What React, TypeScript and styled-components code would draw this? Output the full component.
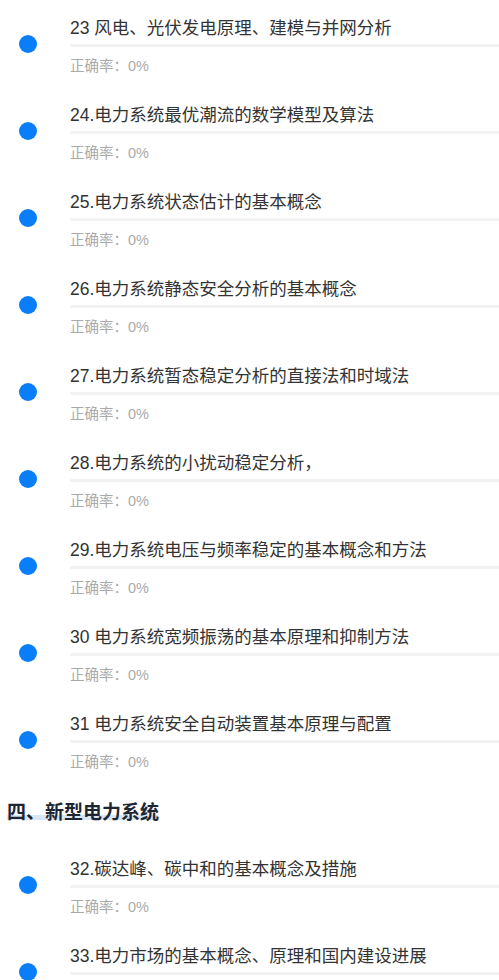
import styled, { createGlobalStyle } from "styled-components";

type Lesson = { title: string; rate: string };

const partThree: Lesson[] = [
  { title: "23 风电、光伏发电原理、建模与并网分析", rate: "0%" },
  { title: "24.电力系统最优潮流的数学模型及算法", rate: "0%" },
  { title: "25.电力系统状态估计的基本概念", rate: "0%" },
  { title: "26.电力系统静态安全分析的基本概念", rate: "0%" },
  { title: "27.电力系统暂态稳定分析的直接法和时域法", rate: "0%" },
  { title: "28.电力系统的小扰动稳定分析，", rate: "0%" },
  { title: "29.电力系统电压与频率稳定的基本概念和方法", rate: "0%" },
  { title: "30 电力系统宽频振荡的基本原理和抑制方法", rate: "0%" },
  { title: "31 电力系统安全自动装置基本原理与配置", rate: "0%" },
];

const partFour: Lesson[] = [
  { title: "32.碳达峰、碳中和的基本概念及措施", rate: "0%" },
  { title: "33.电力市场的基本概念、原理和国内建设进展", rate: "0%" },
];

function LessonItem({ lesson }: { lesson: Lesson }) {
  return (
    <Item>
      <DotCol>
        <Dot />
      </DotCol>
      <Content>
        <Title>{lesson.title}</Title>
        <Track />
        <Rate>正确率：{lesson.rate}</Rate>
      </Content>
    </Item>
  );
}

function App() {
  return (
    <>
      <GlobalStyle />
      <Page>
        {partThree.map((l) => (
          <LessonItem key={l.title} lesson={l} />
        ))}
        <SectionHead>
          <SectionTitle>四、新型电力系统</SectionTitle>
        </SectionHead>
        {partFour.map((l) => (
          <LessonItem key={l.title} lesson={l} />
        ))}
      </Page>
    </>
  );
}

export default App;

const GlobalStyle = createGlobalStyle`
  html, body {
    margin: 0;
    padding: 0;
    overflow: hidden;
    background: #fff;
  }
  body {
    font-family: "Liberation Sans", "Noto Sans CJK SC", sans-serif;
  }
`;

const Page = styled.div`
  width: 499px;
  display: flex;
  flex-direction: column;
`;

const Item = styled.div`
  display: flex;
  height: 87px;
  box-sizing: border-box;
  padding-top: 16px;
`;

const DotCol = styled.div`
  width: 70px;
  flex-shrink: 0;
  box-sizing: border-box;
  padding: 19px 0 0 19px;
`;

const Dot = styled.div`
  width: 18px;
  height: 18px;
  border-radius: 50%;
  background: #0a7ef9;
`;

const Content = styled.div`
  flex: 1;
  min-width: 0;
  display: flex;
  flex-direction: column;
`;

const Title = styled.div`
  font-size: 17.5px;
  line-height: 24px;
  color: #333;
  white-space: nowrap;
`;

const Track = styled.div`
  margin-top: 4px;
  height: 3px;
  border-radius: 2px 0 0 2px;
  background: #f2f2f2;
`;

const Rate = styled.div`
  margin-top: 9px;
  font-size: 14.5px;
  line-height: 20px;
  color: #aaa;
`;

const SectionHead = styled.div`
  height: 58px;
  box-sizing: border-box;
  padding: 17px 0 0 7px;
`;

const SectionTitle = styled.span`
  font-size: 19px;
  line-height: 26px;
  font-weight: 700;
  color: #1f2633;
  background: linear-gradient(transparent 62%, #d6e7f8 62%, #d6e7f8 88%, transparent 88%);
`;
